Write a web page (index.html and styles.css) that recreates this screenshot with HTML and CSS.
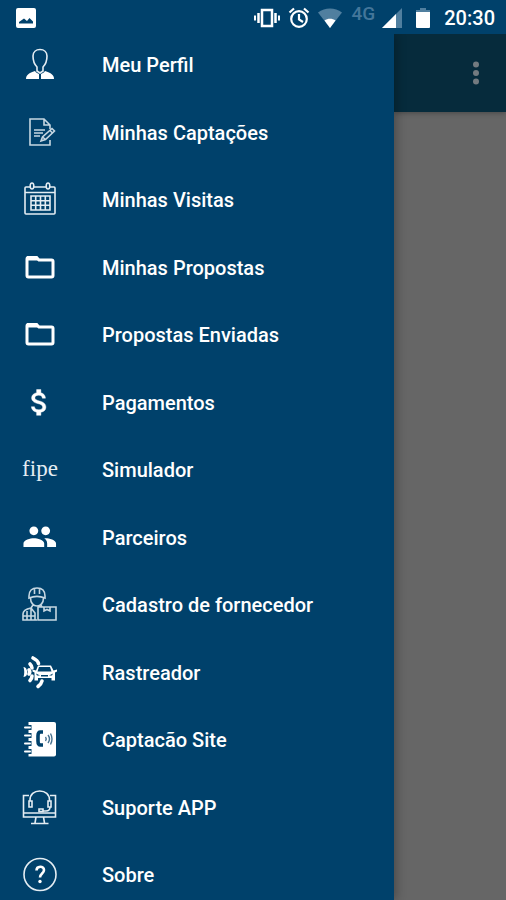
FILE: index.html
```html
<!DOCTYPE html>
<html lang="pt-BR">
<head>
<meta charset="utf-8">
<meta name="viewport" content="width=device-width, initial-scale=1">
<title>Menu</title>
<link rel="stylesheet" href="styles.css">
</head>
<body>
<div class="screen">
  <header class="status">
    <svg class="notice" width="20" height="20" viewBox="0 0 20 20"><path fill="#fff" fill-rule="evenodd" d="M2 0h16a2 2 0 0 1 2 2v16a2 2 0 0 1-2 2H2a2 2 0 0 1-2-2V2a2 2 0 0 1 2-2zM3 15.500h14v-2l-3.500-3.500-2.500 3-3-2.500-5 3.500z"/></svg>
    <div class="indicators">
      <svg width="26" height="20" viewBox="0 0 26 20"><path fill="none" stroke="#fff" stroke-width="2.500" d="M8 2h10v16H8zM4.500 5v10M21.500 5v10"/><path stroke="#fff" stroke-width="2" d="M1 7.500v5M25 7.500v5"/></svg>
      <svg class="alarm" width="22" height="22" viewBox="0 0 22 22" fill="none" stroke="#fff" stroke-width="2.200"><circle cx="11" cy="12" r="7.800"/><path d="M11 7v5.500l4 2.500M1.500 5.500l4.500-4M20.500 5.500l-4.500-4"/></svg>
      <svg class="wifi" width="24" height="20" viewBox="0 0 24 20"><path fill="#507f9f" d="M0 4.500C7-1 17-1 24 4.500L12 20z"/><path fill="#fff" d="M6.500 12.500c3-2.500 8-2.500 11 0L12 20z"/></svg>
      <span class="network">4G</span>
      <svg class="signal" width="20" height="20" viewBox="0 0 20 20"><path fill="#507f9f" d="M20 0v20H0z"/><path fill="#fff" d="M14 6v14H0z"/></svg>
      <svg class="battery" width="14" height="20" viewBox="0 0 14 20"><path fill="#507f9f" d="M4 0h6v2h4v4H0V2h4z"/><path fill="#fff" d="M0 4h14v15a1 1 0 0 1-1 1H1a1 1 0 0 1-1-1z"/></svg>
      <time>20:30</time>
    </div>
  </header>
  <div class="body">
    <nav class="drawer" aria-label="Menu principal">
      <ul>
        <li><a href="#perfil"><svg class="icon" viewBox="0 0 36 36"><path class="line" d="M15 24v-4c-3-3-4-7-4-11 0-4 3-6.500 7-6.500s7 2.500 7 6.500c0 4-1 8-4 11v4l-3 2z"/><path class="fill" d="M4 32c0-4 3-6 9-8 1 2 3 2 4 3v5zM32 32c0-4-3-6-9-8-1 2-3 2-4 3v5z"/></svg><span>Meu Perfil</span></a></li>
        <li><a href="#captacoes"><svg class="icon soft" viewBox="0 0 36 36"><path class="line" d="M28 25v5H8V4h14l6 6v4M22 4v6h6M12 15h11M12 18h9M12 21h6"/><path class="line" d="M19 26l1.500-4L30 13.500l2.500 2.500-9 8.500zM20.500 22l3 2.500M28 15.500l2.500 2.500"/></svg><span>Minhas Captações</span></a></li>
        <li><a href="#visitas"><svg class="icon" viewBox="0 0 36 36"><rect class="line" x="3" y="5" width="30" height="27" rx="1"/><path class="line" d="M3 10.500h30M9 14h19v14H9zM13.700 14v14M18.500 14v14M23.300 14v14M9 18.700h19M9 23.300h19"/><ellipse class="line base" cx="10" cy="4" rx="1.800" ry="3"/><ellipse class="line base" cx="26" cy="4" rx="1.800" ry="3"/></svg><span>Minhas Visitas</span></a></li>
        <li><a href="#propostas"><svg class="icon" viewBox="0 0 36 36"><path class="folder" d="M6.500 7.500h8l2.500 2.500h12.500q1.500 0 1.500 1.500v14q0 1.500-1.500 1.500h-23Q5 27 5 25.500V9q0-1.500 1.500-1.500z"/><path class="fill" d="M5 6h10l3 4.500H5z"/></svg><span>Minhas Propostas</span></a></li>
        <li><a href="#enviadas"><svg class="icon" viewBox="0 0 36 36"><path class="folder" d="M6.500 7.500h8l2.500 2.500h12.500q1.500 0 1.500 1.500v14q0 1.500-1.500 1.500h-23Q5 27 5 25.500V9q0-1.500 1.500-1.500z"/><path class="fill" d="M5 6h10l3 4.500H5z"/></svg><span>Propostas Enviadas</span></a></li>
        <li><a href="#pagamentos"><svg class="icon" viewBox="0 0 36 36"><path class="fill" stroke="#fff" stroke-width=".3" transform="translate(.3 .3) scale(1.430)" d="M11.800 10.900c-2.270-.590-3-1.200-3-2.150 0-1.090 1.010-1.850 2.700-1.850 1.780 0 2.440.850 2.500 2.100h2.210c-.070-1.720-1.120-3.300-3.210-3.810V3h-3v2.160c-1.940.420-3.500 1.680-3.500 3.610 0 2.310 1.910 3.460 4.700 4.130 2.500.600 3 1.480 3 2.410 0 .690-.490 1.790-2.700 1.790-2.060 0-2.870-.920-2.980-2.100h-2.200c.120 2.190 1.760 3.420 3.680 3.830V21h3v-2.150c1.950-.370 3.500-1.500 3.500-3.550 0-2.840-2.430-3.810-4.700-4.400z"/></svg><span>Pagamentos</span></a></li>
        <li><a href="#simulador"><b class="icon fipe">fipe</b><span>Simulador</span></a></li>
        <li><a href="#parceiros"><svg class="icon" viewBox="0 0 36 36"><path class="fill" transform="translate(0 -1) scale(1.480)" d="M16 11c1.660 0 2.990-1.340 2.990-3S17.660 5 16 5s-3 1.340-3 3 1.340 3 3 3zm-8 0c1.660 0 2.990-1.340 2.990-3S9.660 5 8 5 5 6.340 5 8s1.340 3 3 3zm0 2c-2.330 0-7 1.170-7 3.500V19h14v-2.500c0-2.330-4.670-3.500-7-3.500zm8 0c-.290 0-.620.020-.970.050 1.160.840 1.970 1.970 1.970 3.450V19h6v-2.500c0-2.330-4.670-3.500-7-3.500z"/></svg><span>Parceiros</span></a></li>
        <li><a href="#fornecedor"><svg class="icon soft" viewBox="0 0 36 36"><path class="line" d="M7 11V9c0-5 3-8 8-8s8 3 8 8v2c-5-2-11-2-16 0zM12.500 2v5M17.500 2v5M8.500 11c0 5 3 8 6.500 8s6.500-3 6.500-8M15 33H1v-6c0-3 3-5 8-6l2-3M9 21l4 5v7M1 29h12M5 24v9M9 22v11M19 18l1 2"/><path class="line" d="M16 20h18v13H16zM22 20v4l3-1.500 3 1.500v-4M16 20l3-1"/></svg><span>Cadastro de fornecedor</span></a></li>
        <li><a href="#rastreador"><svg class="icon" viewBox="0 0 36 36"><path class="fill" d="M1.500 12c4-.500 6 10 0 10 1-3 1-7 0-10z"/><path class="wave" d="M8 9c1.500 1.500 2 2.500 2 4M10 21c0 2-.500 3-2 4.500M7 15q1.500 2 0 4M11 3c3 1.500 5 3.500 5.500 5.500M20 26c-.5 2.500-2 4-4 5.500"/><path class="fill" fill-rule="evenodd" d="M16 10.500h13l2.500 5 3.500-1v2l-2 1v8h-3.500V23H16v2.500h-3.500v-8l-2-1v-2l3.500 1zM17 12l-1.500 4.500h14L28 12zM14 18.500l1 2h3zM31 18.500l-1 2h-3zM19 20h7v1.500h-7z"/></svg><span>Rastreador</span></a></li>
        <li><a href="#site"><svg class="icon" viewBox="0 0 36 36"><path class="fill" d="M6.500 0H32q2 0 2 2v30.500q0 2-2 2H6.500z"/><path class="notch" d="M6 5.500h3.500M6 13.500h3.500M6 21.500h3.500M6 29.500h3.500"/><path class="ring" d="M3 5.500h5M3 13.500h5M3 21.500h5M3 29.500h5"/><path class="phone" d="M21 10h-2.500q-2.500 0-2.500 4v5q0 4 2.500 4H21"/><path class="sound" d="M23.500 15q1.500 2 0 4M26 13q3 4 0 8M28.500 11.500q3 5.500 0 11"/></svg><span>Captacão Site</span></a></li>
        <li><a href="#suporte"><svg class="icon" viewBox="0 0 36 36"><path class="line" d="M7 5.500H1.500v21.500h32V5.500H28M1.500 23h32M14 27l-1 6M21.500 27l1 6M9 33.500h17.500M8 11v-1c0-5.500 4-9 9.700-9S27.500 4.500 27.500 10v1M28 17q0 4-4 4h-3"/><path class="line" d="M7 11h3v6H7zM26 11h3v6h-3zM17 19h4v2.500h-4z"/></svg><span>Suporte APP</span></a></li>
        <li><a href="#sobre"><svg class="icon" viewBox="0 0 36 36"><circle class="line" cx="18" cy="17.500" r="16"/><path class="question" d="M14.500 13.500c0-5 7.500-5 7.500-.5 0 3.500-4 3.500-4 7.500"/><circle class="fill" cx="18" cy="24.500" r="1.700"/></svg><span>Sobre</span></a></li>
      </ul>
    </nav>
    <main class="content">
      <div class="appbar">
        <button type="button" aria-label="Mais opções"><svg width="6" height="24" viewBox="0 0 6 24" fill="#737b80"><circle cx="3" cy="3.500" r="3"/><circle cx="3" cy="12" r="3"/><circle cx="3" cy="20.500" r="3"/></svg></button>
      </div>
    </main>
  </div>
</div>
</body>
</html>
```
FILE: styles.css
```css
* {
  box-sizing: border-box;
}

body {
  margin: 0;
  background: #666;
  color: #fff;
  font-family: Roboto, "Liberation Sans", sans-serif;
  font-size: 20px;
  font-weight: 500;
}

.screen {
  display: flex;
  flex-direction: column;
  min-height: 100vh;
}

.status {
  position: relative;
  z-index: 1;
  display: flex;
  justify-content: space-between;
  align-items: center;
  height: 34px;
  padding: 1px 11px 0 16px;
  background: #00416b;
}

.indicators {
  display: flex;
  align-items: center;
  gap: 10px;
}

.indicators time {
  line-height: 24px;
}

.indicators .alarm {
  margin-right: -2px;
  margin-left: -2px;
}

.network {
  align-self: flex-start;
  color: #44769a;
  font-size: 19px;
  line-height: 16px;
}

.signal {
  margin-left: -3px;
}

.battery {
  margin: 0 4px;
}

.body {
  display: flex;
  flex: 1;
}

.drawer {
  position: relative;
  display: flex;
  flex: 1;
  background: #00416b;
  box-shadow: 2px 0 10px rgba(0, 0, 0, 0.3);
}

.drawer ul {
  display: flex;
  flex: 1;
  flex-direction: column;
  justify-content: space-between;
  margin: 0;
  padding: 13px 0 7px;
  list-style: none;
}

.drawer a {
  display: flex;
  align-items: center;
  gap: 44px;
  height: 36px;
  padding-left: 22px;
  color: inherit;
  text-decoration: none;
}

.icon {
  flex: none;
  width: 36px;
  height: 36px;
  overflow: visible;
}

.line,
.folder,
.wave,
.ring,
.notch,
.phone,
.sound,
.question {
  fill: none;
  stroke: #fff;
}

.line {
  stroke: #e4edf3;
  stroke-width: 1.6;
}

.soft .line {
  stroke: #c6d7e2;
}

.line.base {
  fill: #00416b;
}

.fill {
  fill: #fff;
}

.folder {
  stroke-width: 3;
}

.wave {
  stroke-width: 3.6;
  stroke-linecap: round;
}

.notch {
  stroke: #00416b;
  stroke-width: 5;
}

.ring {
  stroke-width: 2;
  stroke-linecap: round;
}

.phone {
  stroke: #00416b;
  stroke-width: 3.6;
}

.sound {
  stroke: #47718f;
  stroke-width: 1.4;
}

.question {
  stroke-width: 2.6;
}

.fipe {
  color: #e4edf3;
  font-family: "Liberation Serif", serif;
  font-size: 23px;
  font-weight: 400;
  line-height: 34px;
  text-align: center;
}

.content {
  width: 112px;
}

.appbar {
  display: flex;
  align-items: center;
  justify-content: flex-end;
  height: 78px;
  padding-right: 19px;
  background: #062b3c;
  box-shadow: 0 1px 5px rgba(0, 0, 0, 0.3);
}

.appbar button {
  display: flex;
  padding: 8px;
  border: 0;
  background: none;
}
```
